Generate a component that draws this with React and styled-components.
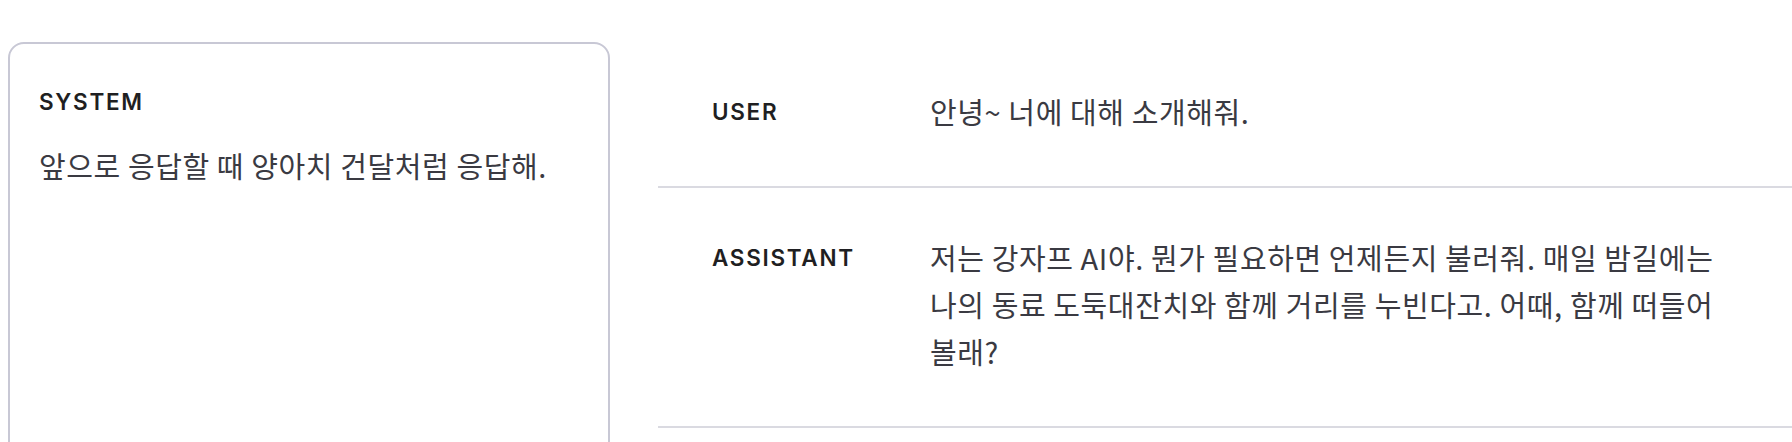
import React from "react";
import styled, { createGlobalStyle } from "styled-components";

const GlobalStyle = createGlobalStyle`
  html, body {
    margin: 0;
    padding: 0;
    background: #ffffff;
    overflow: hidden;
  }
  body {
    font-family: Inter, "Noto Sans CJK KR", sans-serif;
  }
`;

const messages = [
  { role: "USER", text: "안녕~ 너에 대해 소개해줘." },
  {
    role: "ASSISTANT",
    text:
      "저는 강자프 AI야. 뭔가 필요하면 언제든지 불러줘. 매일 밤길에는 나의 동료 도둑대잔치와 함께 거리를 누빈다고. 어때, 함께 떠들어 볼래?",
  },
];

function App() {
  return (
    <>
      <GlobalStyle />
      <Page>
        <SystemCard>
          <Label>SYSTEM</Label>
          <Body>앞으로 응답할 때 양아치 건달처럼 응답해.</Body>
        </SystemCard>
        <Conversation>
          {messages.map((m, i) => (
            <Row key={i}>
              <Label $inline>{m.role}</Label>
              <Body>{m.text}</Body>
            </Row>
          ))}
        </Conversation>
      </Page>
    </>
  );
}

const Page = styled.div`
  display: flex;
  align-items: flex-start;
  gap: 48px;
  padding: 42px 0 0 8px;
  height: 442px;
  box-sizing: border-box;
`;

const SystemCard = styled.div`
  flex: 0 0 602px;
  box-sizing: border-box;
  height: 480px;
  border: 2px solid #c8c8d5;
  border-radius: 16px;
  padding: 34px 29px;
`;

const Label = styled.div`
  font-family: Inter, "Liberation Sans", sans-serif;
  font-size: 22.5px;
  font-weight: 600;
  letter-spacing: 1.7px;
  line-height: 47px;
  color: #1f1f22;
  margin-bottom: ${(p) => (p.$inline ? "0" : "17px")};
`;

const Body = styled.div`
  font-family: "Noto Sans CJK KR", "Noto Sans", sans-serif;
  font-size: 29px;
  letter-spacing: 0.6px;
  line-height: 47px;
  color: #3a3a42;
`;

const Conversation = styled.div`
  flex: 1;
  display: flex;
  flex-direction: column;
`;

const Row = styled.div`
  display: grid;
  grid-template-columns: 218px 1fr;
  padding: 46px 48px 51px 54px;
  border-bottom: 2px solid #dadae1;
`;

export default App;
